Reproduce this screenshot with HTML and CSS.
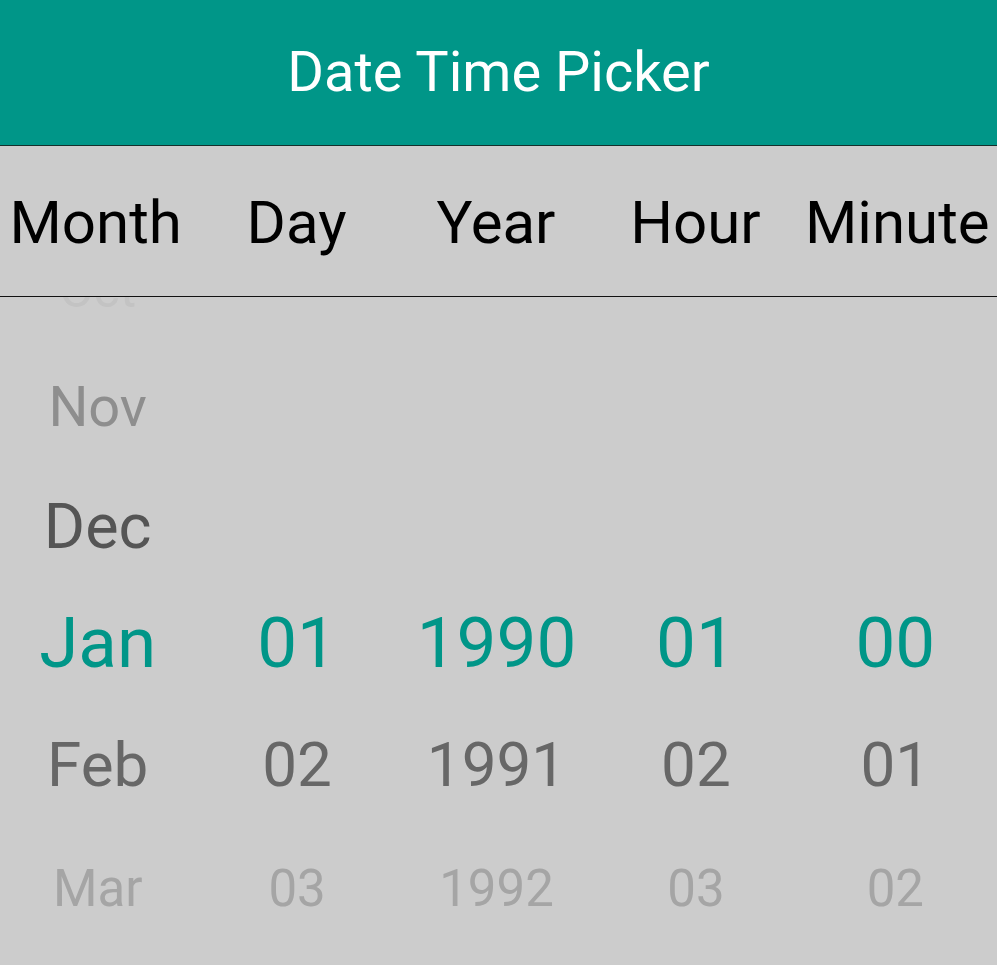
FILE: index.html
```html
<!DOCTYPE html>
<html lang="en">
<head>
<meta charset="utf-8">
<title>Date Time Picker</title>
<link rel="stylesheet" href="styles.css">
</head>
<body>
<header class="appbar">Date Time Picker</header>
<div class="labels">
  <div class="label">Month</div>
  <div class="label">Day</div>
  <div class="label">Year</div>
  <div class="label">Hour</div>
  <div class="label">Minute</div>
</div>
<div class="wheel">
  <div class="wheel-inner">
    <div class="row row-oct">
      <div class="cell">Oct</div><div class="cell"></div><div class="cell"></div><div class="cell"></div><div class="cell"></div>
    </div>
    <div class="row row-nov">
      <div class="cell">Nov</div><div class="cell"></div><div class="cell"></div><div class="cell"></div><div class="cell"></div>
    </div>
    <div class="row row-dec">
      <div class="cell">Dec</div><div class="cell"></div><div class="cell"></div><div class="cell"></div><div class="cell"></div>
    </div>
    <div class="row row-sel">
      <div class="cell">Jan</div><div class="cell">01</div><div class="cell">1990</div><div class="cell">01</div><div class="cell">00</div>
    </div>
    <div class="row row-next">
      <div class="cell">Feb</div><div class="cell">02</div><div class="cell">1991</div><div class="cell">02</div><div class="cell">01</div>
    </div>
    <div class="row row-far">
      <div class="cell">Mar</div><div class="cell">03</div><div class="cell">1992</div><div class="cell">03</div><div class="cell">02</div>
    </div>
  </div>
</div>
</body>
</html>
```
FILE: styles.css
```css
html, body {
  margin: 0;
  padding: 0;
  background: #cccccc;
  font-family: Roboto, "Noto Sans", sans-serif;
}
body {
  width: 997px;
  height: 965px;
  overflow: hidden;
}
.appbar {
  height: 145px;
  line-height: 145px;
  background: #009688;
  color: #ffffff;
  font-size: 56px;
  text-align: center;
  border-bottom: 1px solid #15302c;
}
.labels {
  display: grid;
  grid-template-columns: repeat(5, 1fr);
  padding-top: 3px;
  height: 147px;
  line-height: 147px;
  border-bottom: 1px solid #111111;
}
.label {
  font-size: 60px;
  color: #000000;
  text-align: center;
  white-space: nowrap;
  padding-right: 5px;
}
.label:first-child {
  padding-right: 8px;
}
.label:last-child {
  padding-right: 0;
}
.wheel {
  height: 668px;
  overflow: hidden;
}
.wheel-inner {
  margin-top: -66px;
}
.row {
  display: grid;
  grid-template-columns: repeat(5, 1fr);
  text-align: center;
  white-space: nowrap;
}
.cell {
  padding-right: 4px;
}
.row-oct { height: 118px; line-height: 118px; font-size: 50px; color: #c3c3c3; }
.row-nov { height: 117px; line-height: 117px; font-size: 56px; color: #8e8e8e; }
.row-dec { height: 116px; line-height: 122px; font-size: 63px; color: #555555; }
.row-sel { height: 122px; line-height: 122px; font-size: 71px; color: #009688; }
.row-next { height: 122px; line-height: 122px; font-size: 62px; color: #676767; }
.row-far { height: 125px; line-height: 125px; font-size: 51px; color: #a5a5a5; }
```
